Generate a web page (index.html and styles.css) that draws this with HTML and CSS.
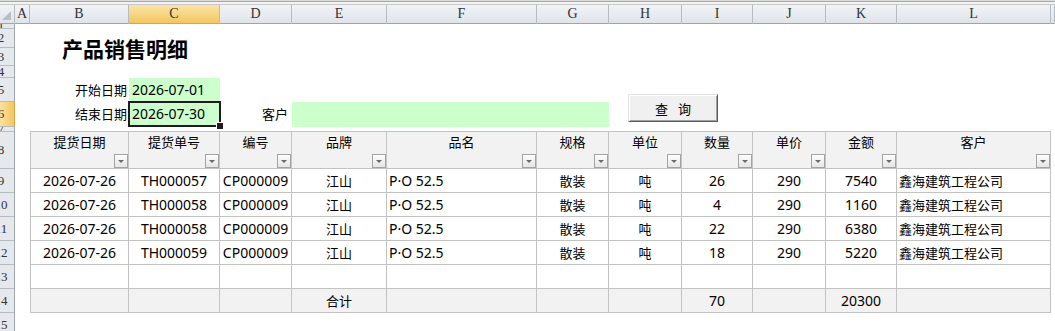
FILE: index.html
```html
<!DOCTYPE html>
<html lang="zh-CN">
<head>
    <meta charset="UTF-8">
    <meta name="viewport" content="width=device-width, initial-scale=1.0">
    <title>产品销售明细</title>
    <link rel="stylesheet" href="styles.css">
</head>
<body>

    <div class="top-edge"></div>

    <!-- column letters -->
    <div class="colbar">
        <div class="corner">
            <svg width="14" height="18" viewBox="0 0 14 18"><polygon points="11,6 11,15 2,15" fill="#b9bec5"/></svg>
        </div>
        <div>A</div>
        <div>B</div>
        <div class="sel">C</div>
        <div>D</div>
        <div>E</div>
        <div>F</div>
        <div>G</div>
        <div>H</div>
        <div>I</div>
        <div>J</div>
        <div>K</div>
        <div>L</div>
        <div class="last"><span>M</span></div>
    </div>

    <div class="sheet">
        <!-- row numbers -->
        <div class="rowbar">
            <div class="r-5"><span>1</span></div>
            <div class="r-19"><span>2</span></div>
            <div class="r-18"><span>3</span></div>
            <div class="r-12"><span>4</span></div>
            <div class="r-24"><span>5</span></div>
            <div class="r-25 sel"><span>6</span></div>
            <div class="r-5"><span>7</span></div>
            <div class="r-37"><span>8</span></div>
            <div class="r-24"><span>9</span></div>
            <div class="r-24"><span>10</span></div>
            <div class="r-24"><span>11</span></div>
            <div class="r-24"><span>12</span></div>
            <div class="r-24"><span>13</span></div>
            <div class="r-24"><span>14</span></div>
            <div class="r-24"><span>15</span></div>
        </div>

        <div class="cells">
            <div class="title">产品销售明细</div>

            <div class="label start-label">开始日期</div>
            <div class="input start-date">2026-07-01</div>

            <div class="label end-label">结束日期</div>
            <div class="input end-date active">2026-07-30</div>

            <div class="label cust-label">客户</div>
            <div class="input cust-input"></div>

            <button class="query"><span>查</span><span>询</span></button>

            <div class="table">
                <div class="th">提货日期<span class="filter"><svg width="12" height="12" viewBox="0 0 12 12"><polygon points="3,5 9,5 6,8" fill="#6b6b6b"/></svg></span></div>
                <div class="th">提货单号<span class="filter"><svg width="12" height="12" viewBox="0 0 12 12"><polygon points="3,5 9,5 6,8" fill="#6b6b6b"/></svg></span></div>
                <div class="th">编号<span class="filter"><svg width="12" height="12" viewBox="0 0 12 12"><polygon points="3,5 9,5 6,8" fill="#6b6b6b"/></svg></span></div>
                <div class="th">品牌<span class="filter"><svg width="12" height="12" viewBox="0 0 12 12"><polygon points="3,5 9,5 6,8" fill="#6b6b6b"/></svg></span></div>
                <div class="th">品名<span class="filter"><svg width="12" height="12" viewBox="0 0 12 12"><polygon points="3,5 9,5 6,8" fill="#6b6b6b"/></svg></span></div>
                <div class="th">规格<span class="filter"><svg width="12" height="12" viewBox="0 0 12 12"><polygon points="3,5 9,5 6,8" fill="#6b6b6b"/></svg></span></div>
                <div class="th">单位<span class="filter"><svg width="12" height="12" viewBox="0 0 12 12"><polygon points="3,5 9,5 6,8" fill="#6b6b6b"/></svg></span></div>
                <div class="th">数量<span class="filter"><svg width="12" height="12" viewBox="0 0 12 12"><polygon points="3,5 9,5 6,8" fill="#6b6b6b"/></svg></span></div>
                <div class="th">单价<span class="filter"><svg width="12" height="12" viewBox="0 0 12 12"><polygon points="3,5 9,5 6,8" fill="#6b6b6b"/></svg></span></div>
                <div class="th">金额<span class="filter"><svg width="12" height="12" viewBox="0 0 12 12"><polygon points="3,5 9,5 6,8" fill="#6b6b6b"/></svg></span></div>
                <div class="th">客户<span class="filter"><svg width="12" height="12" viewBox="0 0 12 12"><polygon points="3,5 9,5 6,8" fill="#6b6b6b"/></svg></span></div>

                <div class="td">2026-07-26</div>
                <div class="td">TH000057</div>
                <div class="td">CP000009</div>
                <div class="td zh">江山</div>
                <div class="td left">P·O 52.5</div>
                <div class="td zh">散装</div>
                <div class="td zh">吨</div>
                <div class="td">26</div>
                <div class="td">290</div>
                <div class="td">7540</div>
                <div class="td zh left">鑫海建筑工程公司</div>

                <div class="td">2026-07-26</div>
                <div class="td">TH000058</div>
                <div class="td">CP000009</div>
                <div class="td zh">江山</div>
                <div class="td left">P·O 52.5</div>
                <div class="td zh">散装</div>
                <div class="td zh">吨</div>
                <div class="td">4</div>
                <div class="td">290</div>
                <div class="td">1160</div>
                <div class="td zh left">鑫海建筑工程公司</div>

                <div class="td">2026-07-26</div>
                <div class="td">TH000058</div>
                <div class="td">CP000009</div>
                <div class="td zh">江山</div>
                <div class="td left">P·O 52.5</div>
                <div class="td zh">散装</div>
                <div class="td zh">吨</div>
                <div class="td">22</div>
                <div class="td">290</div>
                <div class="td">6380</div>
                <div class="td zh left">鑫海建筑工程公司</div>

                <div class="td">2026-07-26</div>
                <div class="td">TH000059</div>
                <div class="td">CP000009</div>
                <div class="td zh">江山</div>
                <div class="td left">P·O 52.5</div>
                <div class="td zh">散装</div>
                <div class="td zh">吨</div>
                <div class="td">18</div>
                <div class="td">290</div>
                <div class="td">5220</div>
                <div class="td zh left">鑫海建筑工程公司</div>

                <!-- blank row -->
                <div class="td"></div><div class="td"></div><div class="td"></div><div class="td"></div>
                <div class="td"></div><div class="td"></div><div class="td"></div><div class="td"></div>
                <div class="td"></div><div class="td"></div><div class="td"></div>

                <!-- totals -->
                <div class="td total"></div>
                <div class="td total"></div>
                <div class="td total"></div>
                <div class="td total zh">合计</div>
                <div class="td total"></div>
                <div class="td total"></div>
                <div class="td total"></div>
                <div class="td total">70</div>
                <div class="td total"></div>
                <div class="td total">20300</div>
                <div class="td total"></div>
            </div>
        </div>
    </div>

</body>
</html>
```

FILE: styles.css
```css
* {
    box-sizing: border-box;
}

body {
    margin: 0;
    background-color: #fff;
    color: #000;
    font-family: "Noto Sans", "Noto Sans CJK SC", sans-serif;
    overflow: hidden;
}

.top-edge {
    height: 5px;
    background-color: #f3f3f3;
    border-top: 1px solid #dcdcdc;
    border-bottom: 1px solid #c9c9c9;
    box-shadow: inset 0 1px 0 #a9a9a9;
}

/* column header strip */
.colbar {
    display: grid;
    grid-template-columns: 15px 15px 99px 91px 72px 95px 150px 72px 73px 71px 73px 71px 154px 1fr;
    height: 19px;
    background: linear-gradient(#f1f3f6, #e0e4e9);
    border-bottom: 1px solid #9ea4ac;
}

.colbar div {
    border-right: 1px solid #b6bcc4;
    text-align: center;
    font: 14px/18px "Liberation Serif", serif;
    color: #333;
}

.colbar .corner {
    line-height: 0;
}

.colbar .sel {
    background: linear-gradient(#fbe4a6, #f3c660);
    border-bottom: 1px solid #d9a640;
}

/* only a sliver of column M is on screen */
.colbar .last {
    overflow: hidden;
}

.colbar .last span {
    display: block;
    width: 72px;
}

.sheet {
    display: flex;
}

/* row number strip, the screenshot cuts it on the left */
.rowbar {
    width: 15px;
    flex: none;
}

.rowbar div {
    display: flex;
    align-items: center;
    overflow: hidden;
    background-color: #e5e8ed;
    border-right: 1px solid #9ea4ac;
    border-bottom: 1px solid #b6bcc4;
    font: 13px "Liberation Serif", serif;
    color: #333;
}

.rowbar span {
    flex: none;
    width: 26px;
    margin-left: -12px;
    text-align: center;
}

.rowbar .sel {
    background: linear-gradient(90deg, #fbe1a0, #f3c660);
    border-right-color: #d9a640;
}

.r-5 { height: 5px; }
.r-12 { height: 12px; }
.r-18 { height: 18px; }
.r-19 { height: 19px; }
.r-24 { height: 24px; }
.r-25 { height: 25px; }
.r-37 { height: 37px; }

.cells {
    flex: 1;
    display: grid;
    grid-template-columns: 15px 99px 91px 72px 95px 150px 72px 73px 71px 73px 71px 154px 1fr;
    grid-template-rows: 5px 19px 18px 12px 24px 25px 5px 37px repeat(7, 24px);
}

.title {
    grid-row: 2 / 4;
    grid-column: 2 / 4;
    align-self: center;
    text-align: center;
    font: bold 21px "Noto Sans CJK SC", sans-serif;
    padding-top: 1px;
}

.label {
    font: 13px/24px "Noto Sans CJK SC", sans-serif;
    text-align: right;
    padding-right: 2px;
}

.start-label { grid-row: 5; grid-column: 2; }
.end-label { grid-row: 6; grid-column: 2; }
.cust-label { grid-row: 6; grid-column: 4; padding-right: 4px; }

.input {
    background-color: #ccffcc;
    font-size: 14px;
    line-height: 23px;
    padding-left: 3px;
}

.start-date { grid-row: 5; grid-column: 3; }

.end-date { grid-row: 6; grid-column: 3; }

.cust-input { grid-row: 6; grid-column: 5 / 8; }

.active {
    position: relative;
    margin: -1px -1px 0 -1px;
    padding-left: 2px;
    line-height: 21px;
    border: 2px solid #221925;
}

.active::after {
    content: "";
    position: absolute;
    right: -5px;
    bottom: -5px;
    width: 6px;
    height: 6px;
    background-color: #221925;
    border: 1px solid #fff;
}

.query {
    grid-row: 5 / 7;
    grid-column: 8 / 10;
    align-self: start;
    justify-self: start;
    margin: 16px 0 0 19px;
    width: 90px;
    height: 28px;
    display: flex;
    justify-content: center;
    align-items: center;
    gap: 10px;
    padding: 0;
    background-color: #f0f0f0;
    border: 1px solid;
    border-color: #e3e3e3 #5c5c5c #5c5c5c #e3e3e3;
    box-shadow: inset 1px 1px 0 #fff, inset -1px -1px 0 #a0a0a0;
    font: 13px "Noto Sans CJK SC", sans-serif;
    color: #000;
}

/* the data table */
.table {
    grid-row: 8 / 15;
    grid-column: 2 / 13;
    margin-top: -1px;
    display: grid;
    grid-template-columns: 98px 91px 72px 95px 150px 72px 73px 71px 73px 71px 154px;
    grid-template-rows: 37px repeat(6, 24px);
    border-top: 1px solid #c3c3c3;
    border-left: 1px solid #c3c3c3;
}

.th {
    display: flex;
    flex-direction: column;
    align-items: center;
    background-color: #f2f2f2;
    border-right: 1px solid #c3c3c3;
    border-bottom: 1px solid #c3c3c3;
    font: 13px/17px "Noto Sans CJK SC", sans-serif;
    padding-top: 1px;
}

.filter {
    margin-top: auto;
    align-self: flex-end;
    width: 14px;
    height: 14px;
    line-height: 0;
    border: 1px solid #a3a3a3;
    background: linear-gradient(#fdfdfd, #e6e6e6);
}

.td {
    border-right: 1px solid #c3c3c3;
    border-bottom: 1px solid #c3c3c3;
    text-align: center;
    font-size: 14px;
    line-height: 23px;
    white-space: nowrap;
}

.td.zh {
    font: 13px/23px "Noto Sans CJK SC", sans-serif;
}

.td.left {
    text-align: left;
    padding-left: 2px;
}

.td.total {
    background-color: #f2f2f2;
}
```
